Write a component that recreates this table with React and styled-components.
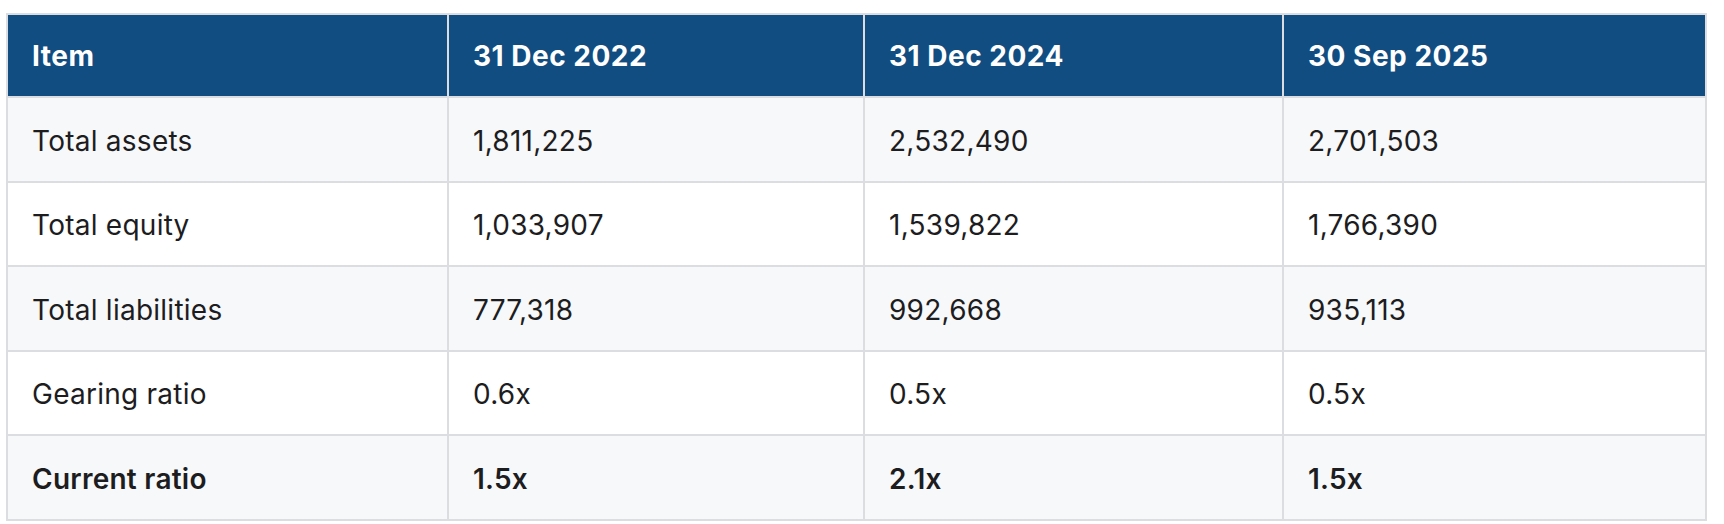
import React from "react";
import styled, { createGlobalStyle } from "styled-components";

const columns = ["Item", "31 Dec 2022", "31 Dec 2024", "30 Sep 2025"];
const widths = [441, 416, 419, 423];

const rows = [
  { label: "Total assets", values: ["1,811,225", "2,532,490", "2,701,503"] },
  { label: "Total equity", values: ["1,033,907", "1,539,822", "1,766,390"] },
  { label: "Total liabilities", values: ["777,318", "992,668", "935,113"] },
  { label: "Gearing ratio", values: ["0.6x", "0.5x", "0.5x"] },
  { label: "Current ratio", values: ["1.5x", "2.1x", "1.5x"], strong: true },
];

const GlobalStyle = createGlobalStyle`
  body {
    margin: 0;
    background: #ffffff;
    font-family: Inter, "Noto Sans", "Liberation Sans", sans-serif;
  }
`;

const Page = styled.div`
  padding: 13px 17px 0 6px;
`;

const Table = styled.table`
  width: 1701px;
  table-layout: fixed;
  border-collapse: collapse;
  border: 2px solid #dcdde0;
  font-size: 28px;
  line-height: 42px;
  color: #1d1d1f;
`;

const Th = styled.th`
  background: #114d81;
  color: #ffffff;
  font-weight: 700;
  letter-spacing: 0.5px;
  text-align: left;
  padding: 20px 24px 19px;
  border: 2px solid #dcdde0;
`;

const Tr = styled.tr`
  background: ${(p) => (p.$alt ? "#f7f8fa" : "#ffffff")};
`;

const Td = styled.td`
  padding: 21.5px 24px 19px;
  border: 2px solid #dcdde0;
  font-weight: ${(p) => (p.$strong ? 600 : 400)};
  letter-spacing: 0.25px;
  white-space: nowrap;
`;

const App = () => {
  return (
    <Page>
      <GlobalStyle />
      <Table>
        <colgroup>
          {widths.map((w, i) => (
            <col key={i} style={{ width: w }} />
          ))}
        </colgroup>
        <thead>
          <tr>
            {columns.map((c) => (
              <Th key={c}>{c}</Th>
            ))}
          </tr>
        </thead>
        <tbody>
          {rows.map((row, i) => (
            <Tr key={row.label} $alt={i % 2 === 0}>
              <Td $strong={row.strong}>{row.label}</Td>
              {row.values.map((v, j) => (
                <Td key={j} $strong={row.strong}>
                  {v}
                </Td>
              ))}
            </Tr>
          ))}
        </tbody>
      </Table>
    </Page>
  );
};

export default App;
